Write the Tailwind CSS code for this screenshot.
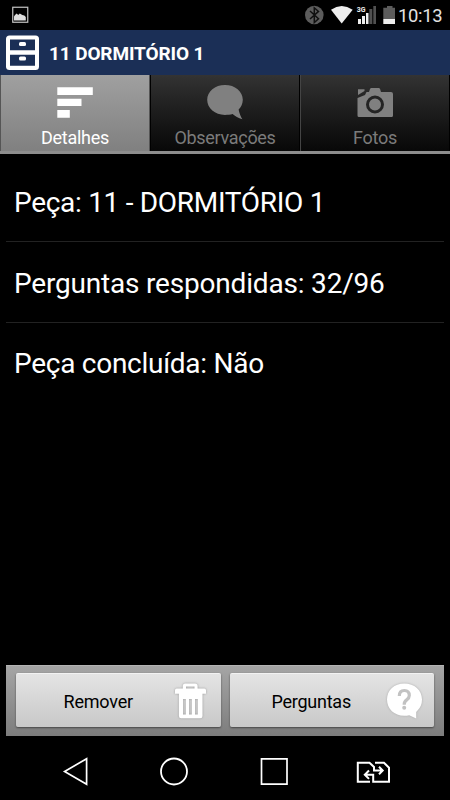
<!DOCTYPE html>
<html lang="pt-BR">
<head>
<meta charset="utf-8">
<title>11 DORMITÓRIO 1</title>
<script src="https://cdn.jsdelivr.net/npm/@tailwindcss/browser@4"></script>
</head>
<body class="bg-black">
<div class="flex h-[800px] w-[450px] flex-col overflow-hidden bg-black font-['Roboto',sans-serif] text-white">
  <!-- Status bar -->
  <div class="flex h-[30px] shrink-0 items-center justify-between pl-3 pr-2">
    <svg class="h-[18px] w-[18px]" viewBox="0 0 18 18"><rect x=".75" y="1.25" width="15" height="15" fill="none" stroke="#c4c4c4" stroke-width="1.2"/><path d="M2 14.500V10.500l1-1.500 1.700-1.500 1.500 1.500 1.600-1.500 2.500 1.500 2 .5 1.500 1.500v3.500z" fill="#ddd"/></svg>
    <div class="flex h-full items-center">
      <svg class="h-[30px] w-[94px]" viewBox="304 0 94 30">
        <circle cx="314.3" cy="15" r="9.3" fill="#5c5c5c"/>
        <path d="M310 11l8.5 7.8-4.2 3.7V7.8l4.2 3.6-8.5 7.6" fill="none" stroke="#101010" stroke-width="1.5"/>
        <path d="M331 9.7Q341.700 2.300 352.700 9.700L341.700 23.600z" fill="#eee"/>
        <g fill="#eee"><path d="M358 19h3v5h-3zM362 16h3v8h-3zM366 13h2.500v11H366z"/></g>
        <path d="M369.300 9h3v15h-3zM373.300 6h2.700v18h-2.700z" fill="#505050"/>
        <path d="M387 6h5.500v1.800h2.500V19h-11.700V7.800h3.700z" fill="#5c5c5c"/><path d="M383.300 19H395v5h-11.700z" fill="#eee"/>
        <text x="356.700" y="12.400" font-size="7.500" font-weight="700" fill="#eee" textLength="8.800" lengthAdjust="spacingAndGlyphs">3G</text>
      </svg>
      <span class="w-[44px] text-right text-[18.400px] leading-[31px] tracking-[-0.300px] text-[#e2e2e2] whitespace-nowrap">10:13</span>
    </div>
  </div>

  <!-- Title bar -->
  <header class="flex h-[45px] shrink-0 items-center bg-[#1b2f56] pl-[5px]">
    <svg class="h-[36px] w-[36px]" viewBox="0 0 36 36"><rect x="1" y=".5" width="33" height="34.500" rx="3.500" fill="#fff"/><path d="M5 4.500h25v10.700H5zM5 19.700h25v11H5z" fill="#1b2f56"/><rect x="14" y="7" width="7" height="4" rx="1.500" fill="#fff"/><rect x="14" y="21.500" width="7" height="4" rx="1.500" fill="#fff"/></svg>
    <h1 class="ml-2 pt-px text-[19px] font-bold leading-[45px] tracking-[-0.120px] whitespace-nowrap">11 DORMITÓRIO 1</h1>
  </header>

  <!-- Tabs -->
  <nav class="grid h-[79px] shrink-0 grid-cols-3 border-b-[3px] border-[#8d8d8d] text-[18px] tracking-[-0.300px] text-[#7b7b7b]">
    <div class="flex flex-col items-center border-l border-r border-[#555] bg-linear-to-b from-[#a0a0a0] to-[#808080] text-white">
      <svg class="h-[50px] w-[60px]" viewBox="45 75 60 50"><path d="M57.300 87.200h35.500V95H57.300zM57.300 98.700h24.200v7.300H57.300zM57.300 110h12.500v7.800H57.300z" fill="#fff"/></svg>
      <span class="leading-[26px]">Detalhes</span>
    </div>
    <div class="flex flex-col items-center border-l border-r border-l-black border-r-black bg-linear-to-b from-[#333] to-[#080808]">
      <svg class="h-[50px] w-[60px]" viewBox="195 75 60 50"><path d="M225 85c10 0 17.800 6.300 17.800 14.800 0 4.500-2 7.500-4.200 9.700 .8 3.800 2 7.200 3.800 9.800-4-1.200-7.500-3-9.800-5.200-2.300.6-5 .8-7.600.8-10 0-17.800-6.600-17.800-15.100S215 85 225 85z" fill="#808080"/></svg>
      <span class="leading-[26px]">Observações</span>
    </div>
    <div class="flex flex-col items-center border-l border-r border-l-[#444] border-r-black bg-linear-to-b from-[#333] to-[#080808]">
      <svg class="h-[50px] w-[60px]" viewBox="345 75 60 50"><path d="M369 92l1-3q.4-1 1.500-1h7q1.200 0 1.600 1l.9 3H391q2 0 2 2v21.500q0 1.500-1.500 1.500h-32.500q-1.500 0-1.500-1.500V98l7.500-3 1.500-3zM358 89.300h6.500v1.700l-6.500 4z" fill="#808080"/><circle cx="375" cy="104.500" r="7.500" fill="#808080" stroke="#242424" stroke-width="3"/></svg>
      <span class="leading-[26px]">Fotos</span>
    </div>
  </nav>

  <!-- Details -->
  <main class="flex grow flex-col px-[6px] pt-[7px] text-[28px] leading-[83px] whitespace-nowrap">
    <div class="h-[81px] border-b border-[#222] pl-2 tracking-[-0.300px]">Peça: 11 - DORMITÓRIO 1</div>
    <div class="h-[81px] border-b border-[#222] pl-2 tracking-[-0.190px]">Perguntas respondidas: 32/96</div>
    <div class="h-[81px] pl-2 leading-[81px] tracking-[-0.270px]">Peça concluída: Não</div>
  </main>

  <!-- Actions -->
  <div class="mx-[6px] flex h-[71px] shrink-0 gap-[9px] border-t border-[#b4b4b4] bg-linear-to-b from-[#a5a5a5] to-[#7d7d7d] px-[10px] pt-[7px] text-[18px] tracking-[-0.200px] text-black">
    <button class="flex h-[54px] grow basis-0 items-center rounded-[2px] border-t border-[#f2f2f2] bg-linear-to-b from-[#e4e4e4] to-[#c8c8c8] shadow-[0_1px_2px_#444]">
      <span class="grow pl-[7px] pt-px text-center">Remover</span>
      <svg class="mr-[13px] h-[40px] w-[34px] drop-shadow-[0_0_1px_#999]" viewBox="174 680 34 40"><path d="M182.800 687.500v-2.500q0-2.500 2.500-2.500h9.800q2.500 0 2.500 2.500v2.500h6.700q1.700 0 1.700 1.700v3.600H202.500V715q0 2.300-2.300 2.300h-19q-2.300 0-2.300-2.300v-22.200H175v-3.600q0-1.700 1.700-1.700zM186 687.500h8.500v-2h-8.500zM183 698v15.500h2.800V698zM189 698v15.500h2.800V698zM195 698v15.500h2.800V698z" fill="#fff" fill-rule="evenodd"/></svg>
    </button>
    <button class="flex h-[54px] grow basis-0 items-center rounded-[2px] border-t border-[#f2f2f2] bg-linear-to-b from-[#e4e4e4] to-[#c8c8c8] shadow-[0_1px_2px_#444]">
      <span class="grow pl-[8px] pt-px text-center tracking-[-0.250px]">Perguntas</span>
      <svg class="mr-[11px] h-[40px] w-[38px] drop-shadow-[0_0_1px_#aaa]" viewBox="385 680 38 40"><path d="M404.300 682.500c10 0 17.700 6.700 17.700 16 0 5-1.700 8-4.500 11l-1.300 1.500 0 6.500-7-3.300c-1.600.4-3 .6-4.900.6-10 0-17.300-7-17.300-16.300s7.300-16 17.300-16z" fill="#fff"/><path d="M399.300 695q0-5.500 5-5.500t5 5q0 2.500-2.600 4.400t-2.500 4.800" fill="none" stroke="#c2c2c2" stroke-width="3.200"/><circle cx="404.200" cy="706.700" r="2" fill="#c2c2c2"/></svg>
    </button>
  </div>

  <!-- System navigation -->
  <div class="flex h-[64px] shrink-0 items-center justify-between pl-[62px] pr-[60px] pt-[8px]">
    <svg class="h-[30px] w-[28px]" viewBox="0 0 28 30" fill="none" stroke="#fff" stroke-width="1.700"><path d="M24.600 1.700v25.600L2.600 14.500z"/></svg>
    <svg class="ml-[4px] h-[30px] w-[30px]" viewBox="0 0 30 30" fill="none" stroke="#fff" stroke-width="1.800"><circle cx="14" cy="14.500" r="13"/></svg>
    <svg class="ml-[4px] h-[30px] w-[30px]" viewBox="0 0 30 30" fill="none" stroke="#fff" stroke-width="1.700"><path d="M1.500 1.800h25.500v25.400H1.500z"/></svg>
    <svg class="h-[30px] w-[34px]" viewBox="356 756 34 30" fill="none" stroke="#fff" stroke-width="2"><path d="M370 780.700h-12.200v-19H369.500l4.500 4.300v3.500h8.500M379 765.700l3.700 3.800-3.700 3.800M375 761.700h9l5 5v14h-15.800v-7h-8.500M369 769.500l-4.200 4.200 4.200 4.200"/></svg>
  </div>
</div>
</body>
</html>
